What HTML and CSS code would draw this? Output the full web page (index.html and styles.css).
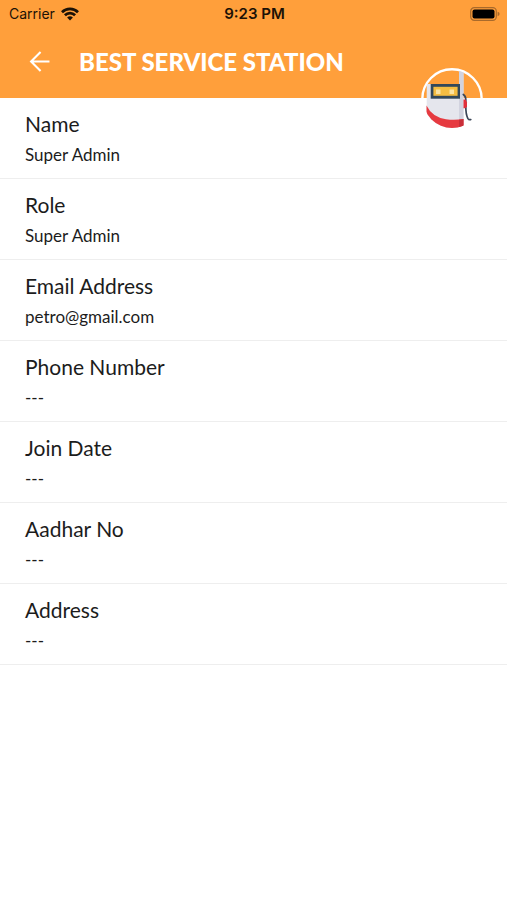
FILE: index.html
```html
<!DOCTYPE html>
<html lang="en">
<head>
<meta charset="utf-8">
<meta name="viewport" content="width=device-width, initial-scale=1">
<title>Best Service Station</title>
<link rel="stylesheet" href="styles.css">
</head>
<body>
<header class="header">
  <div class="status">
    <div class="carrier">
      <span>Carrier</span>
      <svg class="wifi" viewBox="0 0 18 14" aria-hidden="true">
        <g fill="none" stroke="#1c1206" stroke-width="2.7">
          <path d="M1 5.200a11.400 11.400 0 0 1 16 0"/>
          <path d="M3.900 8.300a7.200 7.200 0 0 1 10.200 0"/>
        </g>
        <path fill="#1c1206" d="M6.100 10.600a4.100 4.100 0 0 1 5.800 0L9 13.600z"/>
      </svg>
    </div>
    <time class="clock">9:23 PM</time>
    <svg class="battery" viewBox="0 0 30 14" aria-hidden="true">
      <rect x=".7" y=".7" width="25.600" height="12.600" rx="3.600" fill="none" stroke="#a96a2b" stroke-width="1.200"/>
      <rect x="2.500" y="2.500" width="22" height="9" rx="2" fill="#000"/>
      <path d="M27.600 4.800q2 .6 2 2.200t-2 2.200z" fill="#a96a2b"/>
    </svg>
  </div>
  <div class="bar">
    <button class="back" type="button" aria-label="Back">
      <svg viewBox="0 0 20 20" aria-hidden="true"><path d="M19.500 10H2M11 1 2 10l9 9" fill="none" stroke="#fff" stroke-width="2"/></svg>
    </button>
    <h1 class="title">BEST SERVICE STATION</h1>
  </div>
  <svg class="avatar" viewBox="0 0 62 62" role="img" aria-label="Fuel pump">
    <defs><clipPath id="disc"><circle cx="31" cy="31" r="29"/></clipPath></defs>
    <circle cx="31" cy="31" r="29.700" fill="none" stroke="#fff" stroke-width="2.400"/>
    <g clip-path="url(#disc)">
      <path fill="#e5e6ed" d="M5.700 16H39V2h3.500v58H5.700z"/>
      <path fill="#d2d3df" d="M38 2h4.500v50H38z"/>
      <path fill="#e63a40" d="M5.500 37.500Q11 49 25 51.300q9 1.200 17.500-.3V60H5.500z"/>
      <path fill="#c92f39" d="M38 51.700l4.500-.7V60H38z"/>
      <rect x="9.700" y="16" width="29.300" height="14.700" fill="#32485a"/>
      <rect x="12.400" y="18.800" width="24.200" height="9" fill="#f4bd42"/>
      <path fill="#fbe3a0" d="M15 21.500h4.500V26H15zM28.500 21.500H33V26h-4.500z"/>
      <path fill="none" stroke="#3b4658" stroke-width="1.700" stroke-linecap="round" d="M42.300 26.500q2.400 1.500 2.500 5v7q0 8 2 11.800 1 1.800 3 1.300"/>
      <path fill="#e2303b" d="M42.500 31.500h2.200l1.300 3v4l-1.500 1.800h-2z"/>
    </g>
  </svg>
</header>
<main>
  <dl class="details">
    <div class="row"><dt>Name</dt><dd>Super Admin</dd></div>
    <div class="row"><dt>Role</dt><dd>Super Admin</dd></div>
    <div class="row"><dt>Email Address</dt><dd>petro@gmail.com</dd></div>
    <div class="row"><dt>Phone Number</dt><dd>---</dd></div>
    <div class="row"><dt>Join Date</dt><dd>---</dd></div>
    <div class="row"><dt>Aadhar No</dt><dd>---</dd></div>
    <div class="row"><dt>Address</dt><dd>---</dd></div>
  </dl>
</main>
</body>
</html>
```

FILE: styles.css
```css
* {
  box-sizing: border-box;
}

body {
  margin: 0;
  background: #fff;
  color: #1c1c1c;
  font-family: Lato, "Liberation Sans", sans-serif;
}

.header {
  position: relative;
  background: #ff9f3b;
}

.status {
  display: grid;
  grid-template-columns: 1fr auto 1fr;
  align-items: center;
  height: 27px;
  padding: 0 7px 0 9px;
  color: #1c1206;
  font: 14px/20px Inter, "Liberation Sans", sans-serif;
}

.carrier {
  display: flex;
  align-items: center;
  gap: 6px;
}

.wifi {
  width: 18px;
  height: 14px;
}

.clock {
  font-size: 15px;
  font-weight: 600;
}

.battery {
  justify-self: end;
  width: 30px;
  height: 14px;
}

.bar {
  display: flex;
  align-items: center;
  gap: 29px;
  height: 71px;
  padding: 0 29px 2px;
}

.back {
  display: flex;
  padding: 0;
  border: 0;
  background: none;
  cursor: pointer;
}

.back svg {
  width: 21px;
  height: 21px;
}

.title {
  margin: 0;
  color: #fff;
  font-size: 24px;
  font-weight: 900;
  line-height: 28px;
}

.avatar {
  position: absolute;
  right: 24px;
  bottom: -32px;
  width: 62px;
  height: 62px;
}

.details {
  margin: 0;
}

.row {
  padding: 13px 25px 12px;
  border-bottom: 1px solid #eee;
}

.row dt {
  font-size: 21px;
  line-height: 26px;
}

.row dd {
  margin: 7px 0 0;
  font-size: 17px;
  line-height: 22px;
}
```
